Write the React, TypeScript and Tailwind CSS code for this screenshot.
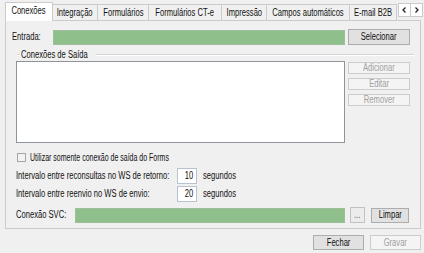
import React from 'react';
import clsx from 'clsx';

function Txt({
  children,
  align = 'left',
  narrow,
}: {
  children: React.ReactNode;
  align?: 'left' | 'center' | 'right';
  narrow?: boolean;
}) {
  return (
    <span
      className={clsx(
        'inline-block whitespace-nowrap',
        narrow ? 'scale-x-[0.7]' : 'scale-x-[0.76]',
        align === 'left' && 'origin-left',
        align === 'center' && 'origin-center',
        align === 'right' && 'origin-right'
      )}
    >
      {children}
    </span>
  );
}

function Btn({ label, className, disabled }: { label: string; className: string; disabled?: boolean }) {
  return (
    <div
      className={clsx(
        'flex shrink-0 items-center justify-center border',
        disabled ? 'border-[#cccccc] bg-[#f4f4f4] text-[#a0a0a0]' : 'border-[#adadad] bg-[#e1e1e1] text-[#111]',
        className
      )}
    >
      <Txt align="center">{label}</Txt>
    </div>
  );
}

function NumBox({ value }: { value: string }) {
  return (
    <div className="flex h-[16px] w-[20px] shrink-0 items-center justify-end border border-[#b9c3d0] bg-white pr-[3px]">
      <Txt align="right">{value}</Txt>
    </div>
  );
}

const tabs = [
  { label: 'Integração', w: 'w-[45px]' },
  { label: 'Formulários', w: 'w-[51px]' },
  { label: 'Formulários CT-e', w: 'w-[73px]' },
  { label: 'Impressão', w: 'w-[45px]' },
  { label: 'Campos automáticos', w: 'w-[83px]' },
  { label: 'E-mail B2B', w: 'w-[47px]' },
];

export default function App() {
  return (
    <div className="h-[253px] w-[424px] overflow-hidden bg-[#f0f0f0] pt-[2px] font-['Liberation_Sans',Arial,sans-serif] text-[10px] leading-none text-[#111]">
      {/* tab strip */}
      <div className="flex h-[18px] items-end pl-[5px]">
        <div className="relative z-10 -mb-px flex h-[19px] w-[48px] shrink-0 items-center justify-center border border-b-0 border-[#cbcbcb] bg-white pb-[2px]">
          <Txt align="center">Conexões</Txt>
        </div>
        {tabs.map((t) => (
          <div
            key={t.label}
            className={clsx('flex h-[16px] shrink-0 items-center justify-center border-t border-r border-[#cbcbcb] bg-[#f0f0f0]', t.w)}
          >
            <Txt align="center">{t.label}</Txt>
          </div>
        ))}
        <div className="ml-[1px] mt-[1px] flex self-start">
          <div className="flex h-[14px] w-[13px] items-center justify-center border border-[#cbcbcb] bg-white">
            <svg width="7" height="8" viewBox="0 0 7 8">
              <path d="M4.5 1.5 L2 4 L4.5 6.5" fill="none" stroke="#222" strokeWidth="1.3" />
            </svg>
          </div>
          <div className="-ml-px flex h-[14px] w-[13px] items-center justify-center border border-[#cbcbcb] bg-white">
            <svg width="7" height="8" viewBox="0 0 7 8">
              <path d="M2.5 1.5 L5 4 L2.5 6.5" fill="none" stroke="#222" strokeWidth="1.3" />
            </svg>
          </div>
        </div>
      </div>

      {/* tab page */}
      <div className="ml-[5px] flex h-[209px] w-[416px] flex-col border border-[#cbcbcb] bg-[#f0f0f0]">
        <div className="ml-[6px] mt-[8px] flex h-[16px] items-center">
          <div className="w-[41px] shrink-0">
            <Txt>Entrada:</Txt>
          </div>
          <div className="h-[15px] w-[292px] shrink-0 border border-[#9fbf9b] bg-[#8fbf8a]" />
          <Btn label="Selecionar" className="ml-[3px] h-[16px] w-[62px]" />
        </div>

        <div className="ml-[11px] mr-[6px] mt-[5px] flex h-[10px] items-center">
          <div className="h-[2px] w-[3px] border-t border-b border-t-[#d5d5d5] border-b-white" />
          <div className="ml-[1px] w-[75px] shrink-0">
            <Txt>Conexões de Saída</Txt>
          </div>
          <div className="h-[2px] flex-1 border-t border-b border-t-[#d5d5d5] border-b-white" />
        </div>

        <div className="ml-[10px] mt-[1px] flex">
          <div className="h-[82px] w-[329px] shrink-0 border border-[#8f949c] bg-white" />
          <div className="ml-[3px] mt-[1px] flex flex-col gap-[4px]">
            <Btn label="Adicionar" className="h-[12px] w-[62px]" disabled />
            <Btn label="Editar" className="h-[12px] w-[62px]" disabled />
            <Btn label="Remover" className="h-[12px] w-[62px]" disabled />
          </div>
        </div>

        <div className="ml-[11px] mt-[10px] flex h-[9px] items-center">
          <div className="h-[9px] w-[9px] shrink-0 border border-[#a5a5a5] bg-[#f3f3f3]" />
          <div className="ml-[4px]">
            <Txt narrow>Utilizar somente conexão de saída do Forms</Txt>
          </div>
        </div>

        <div className="ml-[10px] mt-[6px] flex h-[16px] items-center">
          <div className="w-[161px] shrink-0">
            <Txt>Intervalo entre reconsultas no WS de retorno:</Txt>
          </div>
          <NumBox value="10" />
          <div className="ml-[6px]">
            <Txt>segundos</Txt>
          </div>
        </div>

        <div className="ml-[10px] mt-[2px] flex h-[16px] items-center">
          <div className="w-[161px] shrink-0">
            <Txt>Intervalo entre reenvio no WS de envio:</Txt>
          </div>
          <NumBox value="20" />
          <div className="ml-[6px]">
            <Txt>segundos</Txt>
          </div>
        </div>

        <div className="ml-[10px] mt-[5px] flex h-[16px] items-center">
          <div className="w-[59px] shrink-0">
            <Txt>Conexão SVC:</Txt>
          </div>
          <div className="h-[15px] w-[270px] shrink-0 border border-[#9fbf9b] bg-[#8fbf8a]" />
          <div className="ml-[5px] flex h-[16px] w-[15px] shrink-0 items-center justify-center border border-[#c2c2c2] bg-[#ececec] text-[#6d4c4c]">
            <Txt align="center">...</Txt>
          </div>
          <Btn label="Limpar" className="ml-[6px] h-[15px] w-[38px]" />
        </div>
      </div>

      {/* dialog buttons */}
      <div className="mt-[6px] flex justify-end gap-[6px] pr-[3px]">
        <Btn label="Fechar" className="h-[15px] w-[51px]" />
        <Btn label="Gravar" className="h-[15px] w-[51px]" disabled />
      </div>
    </div>
  );
}
